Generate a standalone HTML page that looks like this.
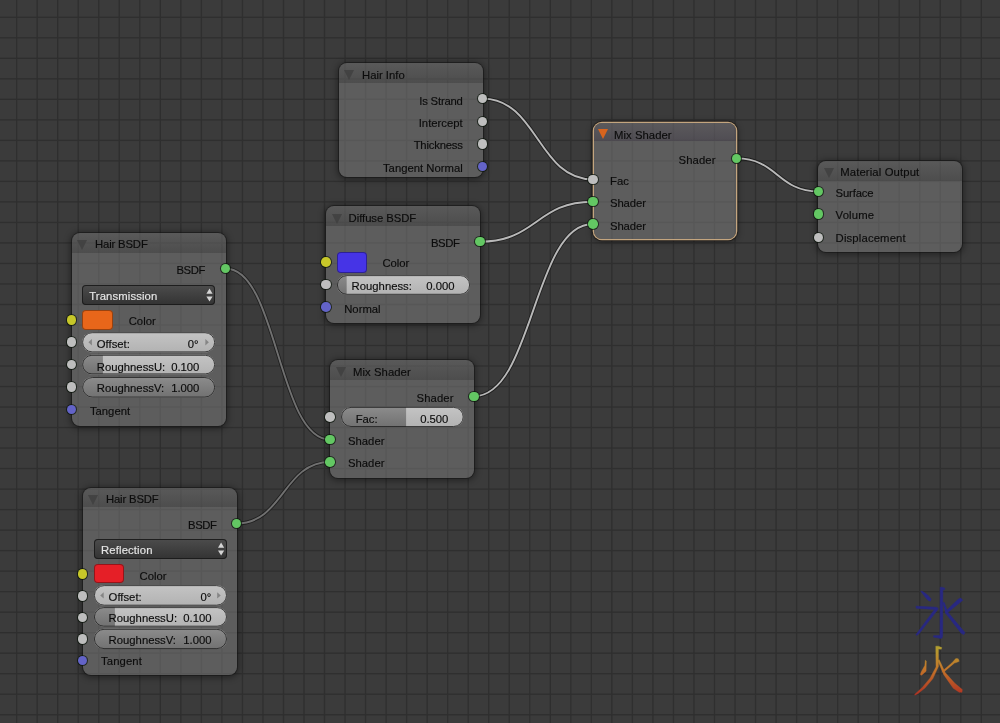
<!DOCTYPE html><html><head><meta charset="utf-8"><style>
html,body{margin:0;padding:0;}
body{width:1000px;height:723px;overflow:hidden;background:#3b3b3b;position:relative;font-family:"Liberation Sans",sans-serif;}
svg{position:absolute;left:0;top:0;}
.n{position:absolute;border-radius:8px;background:rgba(125,125,125,0.52);box-shadow:0 0 0 1px rgba(20,20,20,0.55),0 1px 6px 2px rgba(0,0,0,0.38);overflow:hidden;}
.n .hd{position:absolute;left:0;top:0;right:0;background:linear-gradient(rgba(40,40,40,0.07),rgba(40,40,40,0.3));}
.sel .hd{background:linear-gradient(rgba(70,55,80,0.1),rgba(50,40,60,0.3));}
.sel{box-shadow:0 0 0 1.3px #c3a57f,0 0 0 2.3px rgba(20,15,10,0.45),0 1px 6px 2px rgba(0,0,0,0.38);}
.t{position:absolute;font-size:11.3px;line-height:12px;color:#0c0c0c;white-space:nowrap;-webkit-text-stroke:0.15px currentColor;}
#txt{position:absolute;left:0;top:0;width:1000px;height:723px;will-change:transform;}
.tri{position:absolute;width:0;height:0;border-left:5px solid transparent;border-right:5px solid transparent;border-top:10px solid rgba(60,60,60,0.75);}
.sel2{border-top-width:10.8px !important;}
.s{position:absolute;width:9.6px;height:9.6px;border-radius:50%;box-shadow:0 0 0 1px rgba(10,20,10,0.7);}
.sw{position:absolute;border-radius:4px;box-shadow:inset 0 0 0 1px rgba(0,0,0,0.35);}
.dd{position:absolute;border-radius:4px;background:linear-gradient(#4c4c4c,#333333);box-shadow:inset 0 0 0 1px rgba(25,25,25,0.9);}
.sl{position:absolute;overflow:hidden;background:linear-gradient(#c4c4c4,#b2b2b2);}
.fill{position:absolute;left:0;top:0;bottom:0;background:linear-gradient(#8c8c8c,#717171);}

</style></head><body>
<svg width="1000" height="723"><g fill="#2f2f2f"><rect x="16.00" y="0" width="1.3" height="723"/><rect x="36.52" y="0" width="1.3" height="723"/><rect x="57.05" y="0" width="1.3" height="723"/><rect x="77.57" y="0" width="1.3" height="723"/><rect x="98.10" y="0" width="1.3" height="723"/><rect x="118.62" y="0" width="1.3" height="723"/><rect x="139.15" y="0" width="1.3" height="723"/><rect x="159.67" y="0" width="1.3" height="723"/><rect x="180.20" y="0" width="1.3" height="723"/><rect x="200.72" y="0" width="1.3" height="723"/><rect x="221.25" y="0" width="1.3" height="723"/><rect x="241.77" y="0" width="1.3" height="723"/><rect x="262.30" y="0" width="1.3" height="723"/><rect x="282.82" y="0" width="1.3" height="723"/><rect x="303.35" y="0" width="1.3" height="723"/><rect x="323.88" y="0" width="1.3" height="723"/><rect x="344.40" y="0" width="1.3" height="723"/><rect x="364.92" y="0" width="1.3" height="723"/><rect x="385.45" y="0" width="1.3" height="723"/><rect x="405.97" y="0" width="1.3" height="723"/><rect x="426.50" y="0" width="1.3" height="723"/><rect x="447.02" y="0" width="1.3" height="723"/><rect x="467.55" y="0" width="1.3" height="723"/><rect x="488.07" y="0" width="1.3" height="723"/><rect x="508.60" y="0" width="1.3" height="723"/><rect x="529.12" y="0" width="1.3" height="723"/><rect x="549.65" y="0" width="1.3" height="723"/><rect x="570.17" y="0" width="1.3" height="723"/><rect x="590.70" y="0" width="1.3" height="723"/><rect x="611.22" y="0" width="1.3" height="723"/><rect x="631.75" y="0" width="1.3" height="723"/><rect x="652.27" y="0" width="1.3" height="723"/><rect x="672.80" y="0" width="1.3" height="723"/><rect x="693.32" y="0" width="1.3" height="723"/><rect x="713.85" y="0" width="1.3" height="723"/><rect x="734.38" y="0" width="1.3" height="723"/><rect x="754.90" y="0" width="1.3" height="723"/><rect x="775.42" y="0" width="1.3" height="723"/><rect x="795.95" y="0" width="1.3" height="723"/><rect x="816.47" y="0" width="1.3" height="723"/><rect x="837.00" y="0" width="1.3" height="723"/><rect x="857.52" y="0" width="1.3" height="723"/><rect x="878.05" y="0" width="1.3" height="723"/><rect x="898.57" y="0" width="1.3" height="723"/><rect x="919.10" y="0" width="1.3" height="723"/><rect x="939.62" y="0" width="1.3" height="723"/><rect x="960.15" y="0" width="1.3" height="723"/><rect x="980.67" y="0" width="1.3" height="723"/><rect x="1001.20" y="0" width="1.3" height="723"/><rect x="0" y="16.64" width="1000" height="1.3"/><rect x="0" y="37.15" width="1000" height="1.3"/><rect x="0" y="57.67" width="1000" height="1.3"/><rect x="0" y="78.18" width="1000" height="1.3"/><rect x="0" y="98.69" width="1000" height="1.3"/><rect x="0" y="119.21" width="1000" height="1.3"/><rect x="0" y="139.72" width="1000" height="1.3"/><rect x="0" y="160.23" width="1000" height="1.3"/><rect x="0" y="180.74" width="1000" height="1.3"/><rect x="0" y="201.26" width="1000" height="1.3"/><rect x="0" y="221.77" width="1000" height="1.3"/><rect x="0" y="242.28" width="1000" height="1.3"/><rect x="0" y="262.80" width="1000" height="1.3"/><rect x="0" y="283.31" width="1000" height="1.3"/><rect x="0" y="303.82" width="1000" height="1.3"/><rect x="0" y="324.34" width="1000" height="1.3"/><rect x="0" y="344.85" width="1000" height="1.3"/><rect x="0" y="365.36" width="1000" height="1.3"/><rect x="0" y="385.87" width="1000" height="1.3"/><rect x="0" y="406.39" width="1000" height="1.3"/><rect x="0" y="426.90" width="1000" height="1.3"/><rect x="0" y="447.41" width="1000" height="1.3"/><rect x="0" y="467.93" width="1000" height="1.3"/><rect x="0" y="488.44" width="1000" height="1.3"/><rect x="0" y="508.95" width="1000" height="1.3"/><rect x="0" y="529.47" width="1000" height="1.3"/><rect x="0" y="549.98" width="1000" height="1.3"/><rect x="0" y="570.49" width="1000" height="1.3"/><rect x="0" y="591.00" width="1000" height="1.3"/><rect x="0" y="611.52" width="1000" height="1.3"/><rect x="0" y="632.03" width="1000" height="1.3"/><rect x="0" y="652.54" width="1000" height="1.3"/><rect x="0" y="673.06" width="1000" height="1.3"/><rect x="0" y="693.57" width="1000" height="1.3"/><rect x="0" y="714.08" width="1000" height="1.3"/></g></svg>
<svg width="1000" height="723"><path d="M225.5,268.5 C277.8,268.5 277.8,439.6 330.1,439.6" stroke="#1e1e1e" stroke-width="3.6" fill="none"/><path d="M225.5,268.5 C277.8,268.5 277.8,439.6 330.1,439.6" stroke="#707070" stroke-width="1.9" fill="none"/><path d="M236.3,523.6 C283.20000000000005,523.6 283.20000000000005,462 330.1,462" stroke="#1e1e1e" stroke-width="3.6" fill="none"/><path d="M236.3,523.6 C283.20000000000005,523.6 283.20000000000005,462 330.1,462" stroke="#707070" stroke-width="1.9" fill="none"/><path d="M482.6,98.6 C537.7,98.6 537.7,179.4 592.8,179.4" stroke="#1e1e1e" stroke-width="3.6" fill="none"/><path d="M482.6,98.6 C537.7,98.6 537.7,179.4 592.8,179.4" stroke="#b8b8b8" stroke-width="1.9" fill="none"/><path d="M480.2,241.7 C536.5,241.7 536.5,201.7 592.8,201.7" stroke="#1e1e1e" stroke-width="3.6" fill="none"/><path d="M480.2,241.7 C536.5,241.7 536.5,201.7 592.8,201.7" stroke="#b8b8b8" stroke-width="1.9" fill="none"/><path d="M473.8,396.3 C533.3,396.3 533.3,224 592.8,224" stroke="#1e1e1e" stroke-width="3.6" fill="none"/><path d="M473.8,396.3 C533.3,396.3 533.3,224 592.8,224" stroke="#b8b8b8" stroke-width="1.9" fill="none"/><path d="M736.5,158.4 C777.5,158.4 777.5,191.4 818.5,191.4" stroke="#1e1e1e" stroke-width="3.6" fill="none"/><path d="M736.5,158.4 C777.5,158.4 777.5,191.4 818.5,191.4" stroke="#b8b8b8" stroke-width="1.9" fill="none"/></svg>
<div class="n" style="left:339px;top:62.5px;width:143.5px;height:114.5px"><div class="hd" style="height:20px"></div></div>
<div class="tri" style="left:344.2px;top:69.9px;border-top-color:rgba(62,62,62,0.8)"></div>
<div class="n" style="left:326px;top:206px;width:154px;height:117px"><div class="hd" style="height:19.6px"></div></div>
<div class="tri" style="left:331.9px;top:213.5px;border-top-color:rgba(62,62,62,0.8)"></div>
<div class="n" style="left:330.2px;top:360px;width:143.8px;height:117.7px"><div class="hd" style="height:19.5px"></div></div>
<div class="tri" style="left:335.6px;top:367px;border-top-color:rgba(62,62,62,0.8)"></div>
<div class="n sel" style="left:593.6px;top:122.8px;width:142.8px;height:116.2px"><div class="hd" style="height:18.6px"></div></div>
<div class="tri sel2" style="left:597.8px;top:129px;border-top-color:#d8641e"></div>
<div class="n" style="left:818.3px;top:161px;width:144px;height:91.2px"><div class="hd" style="height:20px"></div></div>
<div class="tri" style="left:824.2px;top:168.2px;border-top-color:rgba(62,62,62,0.8)"></div>
<div class="n" style="left:71.6px;top:233px;width:154.2px;height:192.5px"><div class="hd" style="height:19.5px"></div></div>
<div class="tri" style="left:77.1px;top:239.9px;border-top-color:rgba(62,62,62,0.8)"></div>
<div class="n" style="left:82.8px;top:488px;width:154px;height:187.3px"><div class="hd" style="height:19px"></div></div>
<div class="tri" style="left:88px;top:495.3px;border-top-color:rgba(62,62,62,0.8)"></div>
<div class="sw" style="left:336.9px;top:252.3px;width:30.4px;height:20.4px;background:#4634e6"></div>
<div class="sw" style="left:82.2px;top:309.6px;width:30.6px;height:20.2px;background:#e8661a"></div>
<div class="sw" style="left:94.0px;top:564.4px;width:30.2px;height:19.0px;background:#e51f27"></div>
<div class="dd" style="left:82.1px;top:284.59999999999997px;width:133.3px;height:20.5px"></div>
<svg width="1000" height="723"><path d="M206.40,293.65 L212.60,293.65 L209.50,288.45Z M206.40,296.45 L212.60,296.45 L209.50,301.45Z" fill="#d4d4d4"/></svg>
<div class="dd" style="left:93.69999999999999px;top:539.0px;width:133.3px;height:20.0px"></div>
<svg width="1000" height="723"><path d="M218.00,547.80 L224.20,547.80 L221.10,542.60Z M218.00,550.60 L224.20,550.60 L221.10,555.60Z" fill="#d4d4d4"/></svg>
<svg width="1000" height="723"><defs><linearGradient id="gl" x1="0" y1="0" x2="0" y2="1"><stop offset="0" stop-color="#c4c4c4"/><stop offset="1" stop-color="#b2b2b2"/></linearGradient><linearGradient id="gd" x1="0" y1="0" x2="0" y2="1"><stop offset="0" stop-color="#8c8c8c"/><stop offset="1" stop-color="#717171"/></linearGradient></defs><clipPath id="c0"><rect x="336.90" y="275.10" width="133.20" height="19.70" rx="9.85"/></clipPath><rect x="336.90" y="275.10" width="133.20" height="19.70" rx="9.85" fill="url(#gl)"/><rect x="336.90" y="275.10" width="9.75" height="19.70" fill="url(#gd)" clip-path="url(#c0)"/><rect x="337.40" y="275.60" width="132.20" height="18.70" rx="9.35" fill="none" stroke="rgba(30,30,30,0.8)" stroke-width="1"/><clipPath id="c1"><rect x="341.00" y="406.90" width="122.70" height="20.10" rx="10.05"/></clipPath><rect x="341.00" y="406.90" width="122.70" height="20.10" rx="10.05" fill="url(#gl)"/><rect x="341.00" y="406.90" width="65.10" height="20.10" fill="url(#gd)" clip-path="url(#c1)"/><rect x="341.50" y="407.40" width="121.70" height="19.10" rx="9.55" fill="none" stroke="rgba(30,30,30,0.8)" stroke-width="1"/><clipPath id="c2"><rect x="82.10" y="332.20" width="133.05" height="20.20" rx="10.10"/></clipPath><rect x="82.10" y="332.20" width="133.05" height="20.20" rx="10.10" fill="url(#gl)"/><rect x="82.60" y="332.70" width="132.05" height="19.20" rx="9.60" fill="none" stroke="rgba(30,30,30,0.8)" stroke-width="1"/><path d="M88.40,342.30 L91.90,339.10 L91.90,345.50Z M208.85,342.30 L205.35,339.10 L205.35,345.50Z" fill="rgba(90,90,90,0.55)"/><clipPath id="c3"><rect x="82.10" y="354.80" width="133.05" height="19.60" rx="9.80"/></clipPath><rect x="82.10" y="354.80" width="133.05" height="19.60" rx="9.80" fill="url(#gl)"/><rect x="82.10" y="354.80" width="20.80" height="19.60" fill="url(#gd)" clip-path="url(#c3)"/><rect x="82.60" y="355.30" width="132.05" height="18.60" rx="9.30" fill="none" stroke="rgba(30,30,30,0.8)" stroke-width="1"/><clipPath id="c4"><rect x="82.10" y="377.00" width="133.05" height="20.60" rx="10.30"/></clipPath><rect x="82.10" y="377.00" width="133.05" height="20.60" rx="10.30" fill="url(#gl)"/><rect x="82.10" y="377.00" width="133.05" height="20.60" fill="url(#gd)" clip-path="url(#c4)"/><rect x="82.60" y="377.50" width="132.05" height="19.60" rx="9.80" fill="none" stroke="rgba(30,30,30,0.8)" stroke-width="1"/><clipPath id="c5"><rect x="93.90" y="585.10" width="133.10" height="20.60" rx="10.30"/></clipPath><rect x="93.90" y="585.10" width="133.10" height="20.60" rx="10.30" fill="url(#gl)"/><rect x="94.40" y="585.60" width="132.10" height="19.60" rx="9.80" fill="none" stroke="rgba(30,30,30,0.8)" stroke-width="1"/><path d="M100.20,595.40 L103.70,592.20 L103.70,598.60Z M220.70,595.40 L217.20,592.20 L217.20,598.60Z" fill="rgba(90,90,90,0.55)"/><clipPath id="c6"><rect x="93.90" y="607.10" width="133.10" height="19.60" rx="9.80"/></clipPath><rect x="93.90" y="607.10" width="133.10" height="19.60" rx="9.80" fill="url(#gl)"/><rect x="93.90" y="607.10" width="21.00" height="19.60" fill="url(#gd)" clip-path="url(#c6)"/><rect x="94.40" y="607.60" width="132.10" height="18.60" rx="9.30" fill="none" stroke="rgba(30,30,30,0.8)" stroke-width="1"/><clipPath id="c7"><rect x="93.90" y="628.80" width="133.10" height="20.30" rx="10.15"/></clipPath><rect x="93.90" y="628.80" width="133.10" height="20.30" rx="10.15" fill="url(#gl)"/><rect x="93.90" y="628.80" width="133.10" height="20.30" fill="url(#gd)" clip-path="url(#c7)"/><rect x="94.40" y="629.30" width="132.10" height="19.30" rx="9.65" fill="none" stroke="rgba(30,30,30,0.8)" stroke-width="1"/></svg>
<div class="s" style="left:477.80px;top:93.80px;background:#bebebe"></div>
<div class="s" style="left:477.80px;top:116.50px;background:#bebebe"></div>
<div class="s" style="left:477.80px;top:139.40px;background:#bebebe"></div>
<div class="s" style="left:477.80px;top:161.90px;background:#6363c7"></div>
<div class="s" style="left:475.40px;top:236.90px;background:#63c763"></div>
<div class="s" style="left:321.10px;top:257.30px;background:#c7c729"></div>
<div class="s" style="left:321.10px;top:279.60px;background:#bebebe"></div>
<div class="s" style="left:321.10px;top:302.00px;background:#6363c7"></div>
<div class="s" style="left:469.00px;top:391.50px;background:#63c763"></div>
<div class="s" style="left:325.30px;top:412.30px;background:#bebebe"></div>
<div class="s" style="left:325.30px;top:434.80px;background:#63c763"></div>
<div class="s" style="left:325.30px;top:457.20px;background:#63c763"></div>
<div class="s" style="left:731.70px;top:153.60px;background:#63c763"></div>
<div class="s" style="left:588.00px;top:174.60px;background:#bebebe"></div>
<div class="s" style="left:588.00px;top:196.90px;background:#63c763"></div>
<div class="s" style="left:588.00px;top:219.20px;background:#63c763"></div>
<div class="s" style="left:813.70px;top:186.60px;background:#63c763"></div>
<div class="s" style="left:813.70px;top:209.20px;background:#63c763"></div>
<div class="s" style="left:813.70px;top:232.70px;background:#bebebe"></div>
<div class="s" style="left:220.70px;top:263.70px;background:#63c763"></div>
<div class="s" style="left:66.80px;top:315.20px;background:#c7c729"></div>
<div class="s" style="left:66.80px;top:337.20px;background:#bebebe"></div>
<div class="s" style="left:66.80px;top:359.80px;background:#bebebe"></div>
<div class="s" style="left:66.80px;top:382.40px;background:#bebebe"></div>
<div class="s" style="left:66.80px;top:404.90px;background:#6363c7"></div>
<div class="s" style="left:231.50px;top:518.80px;background:#63c763"></div>
<div class="s" style="left:77.90px;top:569.20px;background:#c7c729"></div>
<div class="s" style="left:77.90px;top:591.40px;background:#bebebe"></div>
<div class="s" style="left:77.90px;top:612.90px;background:#bebebe"></div>
<div class="s" style="left:77.90px;top:634.10px;background:#bebebe"></div>
<div class="s" style="left:77.90px;top:655.90px;background:#6363c7"></div>
<svg width="1000" height="723"><defs><linearGradient id="fg" x1="0" y1="646" x2="0" y2="695" gradientUnits="userSpaceOnUse"><stop offset="0" stop-color="#b0a030"/><stop offset="0.45" stop-color="#c4782a"/><stop offset="1" stop-color="#b03222"/></linearGradient></defs>
<g fill="#282882" stroke="#282882" stroke-width="0.6" stroke-linejoin="round">
<path d="M920.8,591 L923.5,592 L927.5,595 L931.2,599 L930.3,601.2 L928,600.3 L925,596.8 L921.2,591.8Z"/>
<path d="M916,606.2 L936.5,607.3 L938.2,608.4 L937.6,609.8 L919,633.8 L916.6,635.5 L916,634.6 L934.6,609.4 L916.2,608.2Z"/>
<path d="M940.2,587.2 L942.8,587.4 L945,588.4 L944.6,589.6 L942.8,589.8 L942.6,636.2 L941.8,638.3 L939.8,638.3 L933.5,637 L933.6,635.8 L940,635.6 L940.2,590Z"/>
<path d="M945,612 L958.2,599.3 L960.6,598 L962.8,600.3 L961.2,601.6 L946,613.8Z"/>
<path d="M942.8,602.8 L944.3,602.5 L947.9,612.3 L962.5,629.8 L965,632.6 L963.8,634.6 L961.2,633.2 L946.2,614Z"/>
</g>
<g fill="url(#fg)" stroke="url(#fg)" stroke-width="0.4" stroke-linejoin="round">
<path d="M925.3,660.2 L926.3,661 L926.1,671.2 L921.6,675.3 L920.3,674.6 L921.3,671.8 L924.8,665.5Z"/>
<path d="M935.8,646.2 L938.3,646.2 L941.8,647.6 L941.3,649.2 L938.4,649 L938.4,666.6 L932.8,678.8 L925,688 L917.8,693.8 L914.8,695.2 L914.8,694.2 L922,687.8 L930,678.2 L936,667 L935.8,649Z"/>
<path d="M942.3,671.2 L952,662.8 L955.8,658.6 L958.2,658.8 L959.2,661.3 L957,662.3 L954.5,663 L943.3,672.4Z"/>
<path d="M937.8,660.6 L939.3,659.8 L945.2,672.6 L954.8,683.2 L962.3,689.6 L962,692.3 L959.2,692.2 L953.2,688.2 L943.6,674.4Z"/>
</g></svg>
<div id="txt"><div class="t" style="top:69.20px;left:362.00px;">Hair Info</div><div class="t" style="top:212.00px;left:348.60px;letter-spacing:-0.05px;">Diffuse BSDF</div><div class="t" style="top:366.00px;left:352.90px;letter-spacing:0.08px;">Mix Shader</div><div class="t" style="top:128.80px;left:614.00px;letter-spacing:0.05px;">Mix Shader</div><div class="t" style="top:166.00px;left:840.20px;letter-spacing:0.13px;">Material Output</div><div class="t" style="top:238.00px;left:95.00px;letter-spacing:-0.15px;">Hair BSDF</div><div class="t" style="top:492.90px;left:105.90px;letter-spacing:-0.15px;">Hair BSDF</div><div class="t" style="top:289.60px;left:89.20px;color:#e6e6e6;letter-spacing:0.12px;">Transmission</div><div class="t" style="top:544.20px;left:101.10px;color:#e6e6e6;letter-spacing:0.12px;">Reflection</div><div class="t" style="top:279.90px;left:351.60px;">Roughness:</div><div class="t" style="top:279.90px;right:545.50px;">0.000</div><div class="t" style="top:412.70px;left:355.70px;">Fac:</div><div class="t" style="top:412.70px;right:551.60px;">0.500</div><div class="t" style="top:337.70px;left:96.80px;">Offset:</div><div class="t" style="top:337.70px;right:801.40px;">0°</div><div class="t" style="top:360.50px;left:96.80px;">RoughnessU:</div><div class="t" style="top:360.50px;right:800.60px;">0.100</div><div class="t" style="top:382.30px;left:96.80px;">RoughnessV:</div><div class="t" style="top:382.30px;right:800.60px;">1.000</div><div class="t" style="top:590.70px;left:108.60px;">Offset:</div><div class="t" style="top:590.70px;right:788.70px;">0°</div><div class="t" style="top:612.30px;left:108.60px;">RoughnessU:</div><div class="t" style="top:612.30px;right:788.50px;">0.100</div><div class="t" style="top:634.10px;left:108.60px;">RoughnessV:</div><div class="t" style="top:634.10px;right:788.50px;">1.000</div><div class="t" style="top:94.80px;right:537.30px;letter-spacing:-0.2px;">Is Strand</div><div class="t" style="top:116.90px;right:537.30px;">Intercept</div><div class="t" style="top:139.20px;right:537.30px;letter-spacing:-0.2px;">Thickness</div><div class="t" style="top:162.10px;right:537.30px;">Tangent Normal</div><div class="t" style="top:237.30px;right:540.60px;letter-spacing:-0.4px;">BSDF</div><div class="t" style="top:257.40px;left:382.40px;">Color</div><div class="t" style="top:303.00px;left:344.20px;">Normal</div><div class="t" style="top:391.90px;right:546.40px;letter-spacing:0.1px;">Shader</div><div class="t" style="top:435.20px;left:348.00px;letter-spacing:0px;">Shader</div><div class="t" style="top:457.00px;left:348.00px;letter-spacing:0px;">Shader</div><div class="t" style="top:154.30px;right:284.40px;letter-spacing:0.1px;">Shader</div><div class="t" style="top:174.60px;left:610.00px;">Fac</div><div class="t" style="top:197.40px;left:610.00px;letter-spacing:-0.1px;">Shader</div><div class="t" style="top:219.80px;left:610.00px;letter-spacing:-0.1px;">Shader</div><div class="t" style="top:186.90px;left:835.60px;letter-spacing:-0.15px;">Surface</div><div class="t" style="top:208.70px;left:835.60px;letter-spacing:0.15px;">Volume</div><div class="t" style="top:231.50px;left:835.60px;letter-spacing:0.15px;">Displacement</div><div class="t" style="top:264.00px;right:795.00px;letter-spacing:-0.4px;">BSDF</div><div class="t" style="top:314.50px;left:128.70px;">Color</div><div class="t" style="top:405.40px;left:89.90px;">Tangent</div><div class="t" style="top:518.80px;right:783.40px;letter-spacing:-0.4px;">BSDF</div><div class="t" style="top:570.10px;left:139.50px;">Color</div><div class="t" style="top:655.40px;left:101.00px;letter-spacing:0.1px;">Tangent</div></div>
</body></html>
